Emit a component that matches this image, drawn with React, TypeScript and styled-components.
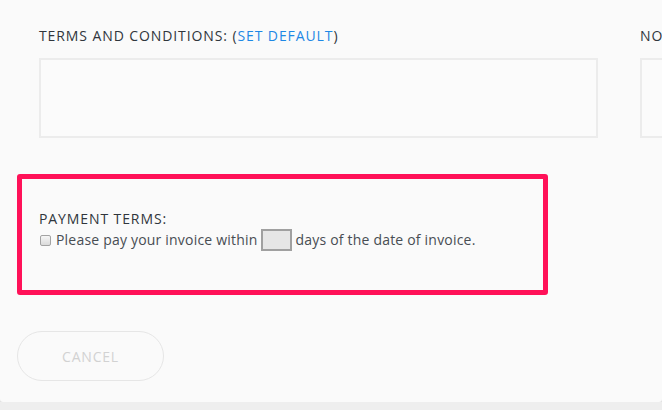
import React from 'react';
import styled, { createGlobalStyle } from 'styled-components';

const GlobalStyle = createGlobalStyle`
  html, body {
    margin: 0;
    padding: 0;
    background: #eeeeee;
    overflow: hidden;
  }
  body {
    font-family: 'Open Sans', 'Liberation Sans', sans-serif;
  }
`;

const Card = styled.div`
  width: 100%;
  height: 402px;
  background: #fafafa;
  border-radius: 0 0 3px 3px;
  box-shadow: 0 1px 2px rgba(0, 0, 0, 0.1);
  overflow: hidden;
  display: flex;
  flex-direction: column;
`;

const FieldsRow = styled.div`
  display: flex;
  gap: 42px;
  padding: 26px 0 0 39px;
  width: 1400px;
`;

const Field = styled.div`
  width: 559px;
  flex-shrink: 0;
  display: flex;
  flex-direction: column;
`;

const Label = styled.div`
  font-size: 14px;
  line-height: 20px;
  letter-spacing: 0.9px;
  color: #30363c;
  text-transform: uppercase;
  white-space: nowrap;
  margin-bottom: 12px;
`;

const Link = styled.span`
  color: #1e88e5;
  cursor: pointer;
`;

const TextBox = styled.div`
  height: 80px;
  box-sizing: border-box;
  border: 2px solid #ececec;
  background: #fbfbfb;
`;

const Highlight = styled.section`
  margin: 36px 0 0 17px;
  width: 531px;
  height: 121px;
  box-sizing: border-box;
  border: 5px solid #ff1158;
  border-radius: 3px;
  padding: 30px 17px 0;
`;

const SubLabel = styled.div`
  font-size: 14px;
  line-height: 20px;
  letter-spacing: 0.9px;
  color: #30363c;
  text-transform: uppercase;
`;

const TermsLine = styled.label`
  display: flex;
  align-items: center;
  font-size: 14px;
  line-height: 20px;
  letter-spacing: 0.2px;
  color: #484d53;
  gap: 3px;
  white-space: nowrap;
`;

const Check = styled.span`
  width: 11px;
  height: 11px;
  box-sizing: border-box;
  border: 1px solid #a3a3a3;
  border-radius: 2px;
  background: linear-gradient(#f6f6f6, #dadada);
  margin: 1px 2px 0 1px;
`;

const DaysInput = styled.span`
  width: 31px;
  height: 22px;
  box-sizing: border-box;
  border: 2px solid #a0a0a0;
  background: #e6e6e6;
  margin-right: 1px;
`;

const Actions = styled.div`
  padding: 36px 0 0 17px;
`;

const CancelButton = styled.button`
  width: 147px;
  height: 50px;
  border: 1px solid #e6e6e6;
  border-radius: 25px;
  background: transparent;
  color: #d2d2d2;
  font-family: inherit;
  font-size: 14px;
  letter-spacing: 0.8px;
  text-transform: uppercase;
`;

export default function App() {
  return (
    <>
      <GlobalStyle />
      <Card>
        <FieldsRow>
          <Field>
            <Label>
              Terms and conditions: (<Link>Set default</Link>)
            </Label>
            <TextBox />
          </Field>
          <Field>
            <Label>Notes:</Label>
            <TextBox />
          </Field>
        </FieldsRow>

        <Highlight>
          <SubLabel>Payment terms:</SubLabel>
          <TermsLine>
            <Check />
            Please pay your invoice within
            <DaysInput />
            days of the date of invoice.
          </TermsLine>
        </Highlight>

        <Actions>
          <CancelButton>Cancel</CancelButton>
        </Actions>
      </Card>
    </>
  );
}
